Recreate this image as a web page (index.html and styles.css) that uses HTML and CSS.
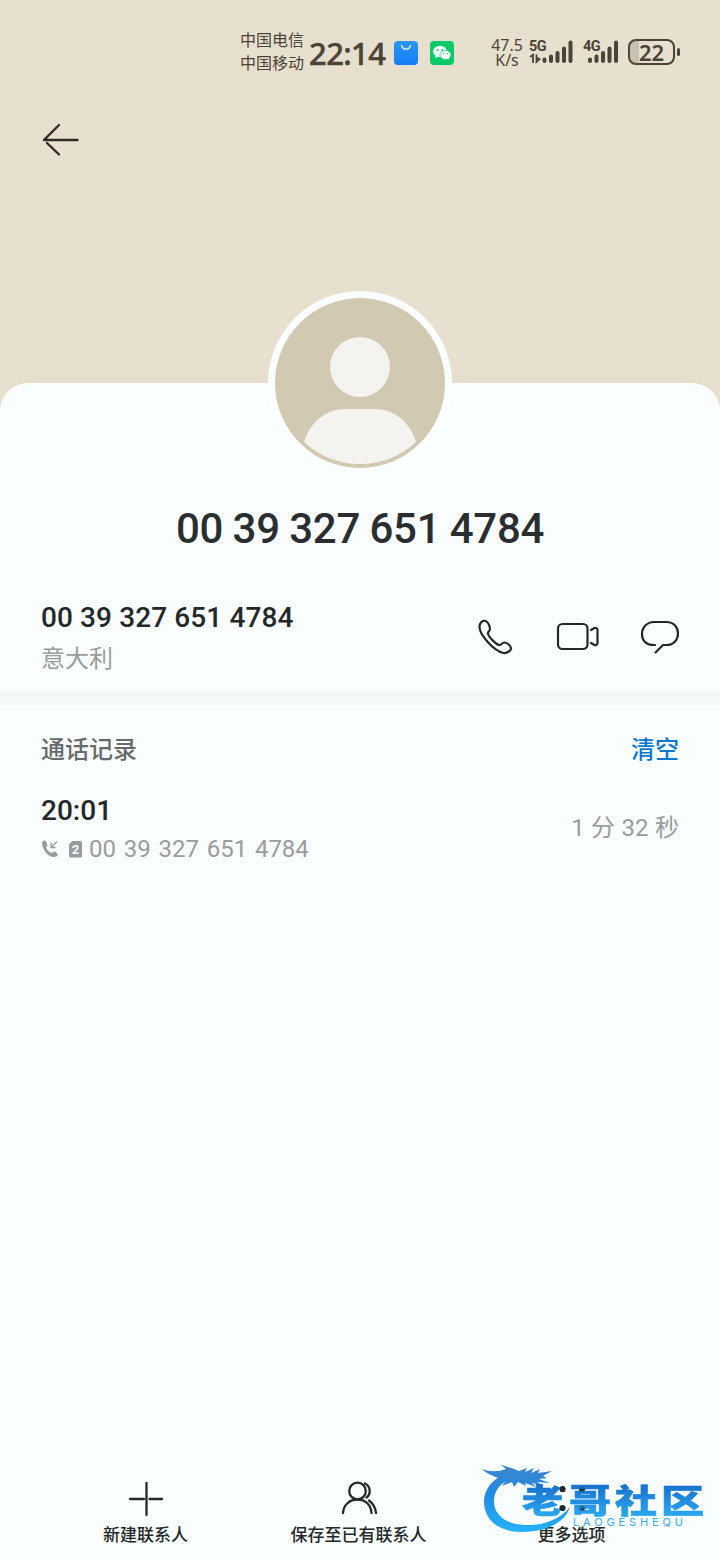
FILE: index.html
```html
<!DOCTYPE html>
<html lang="zh-CN">
<head>
<meta charset="utf-8">
<title>联系人</title>
<link rel="stylesheet" href="styles.css">
</head>
<body>
<div class="screen">
  <header class="hero">
    <div class="status">
      <div class="carriers"><span>中国电信</span><span>中国移动</span></div>
      <div class="clock">22:14</div>
      <svg class="app" viewBox="0 0 24 24"><defs><linearGradient id="shop" x2="0" y2="1"><stop stop-color="#2b98f5"/><stop offset="1" stop-color="#147cf8"/></linearGradient></defs><rect width="24" height="24" rx="4" fill="url(#shop)"/><path d="M7.500 4.500a4.600 4.600 0 0 0 9 0" fill="none" stroke="#e6f4ff" stroke-width="1.300" stroke-linecap="round"/></svg>
      <svg class="app wechat" viewBox="0 0 24 24"><rect width="24" height="24" rx="4" fill="#08ca68"/><path d="M10 5C6 5 3.200 7.400 3.200 10.500c0 1.800 1 3.300 2.500 4.300L5.300 17l2.500-1.300 2.200.3c4 0 6.800-2.400 6.800-5.500S14 5 10 5z" fill="#fff"/><path d="M15.500 9.500c-3.200 0-5.600 2-5.600 4.500s2.400 4.500 5.600 4.500l1.800-.3 2 1-.4-1.800c1.300-.8 2.100-2 2.100-3.400 0-2.500-2.300-4.500-5.500-4.500z" fill="#fff" stroke="#08ca68" stroke-width=".7"/><g fill="#08ca68"><circle cx="7.700" cy="9" r=".9"/><circle cx="12.200" cy="9" r=".9"/><circle cx="13.700" cy="12.700" r=".7"/><circle cx="17.300" cy="12.700" r=".7"/></g></svg>
      <div class="speed"><span>47.5</span><span>K/s</span></div>
      <div class="signal">
        <span class="net">5G</span>
        <svg viewBox="0 0 46 28"><g stroke="#4a4437" stroke-width="4" stroke-linecap="round"><path d="M15.500 20.500v1.500M22 17.500v4.500M28.500 14v8M35 9.500v12.500M41.500 3.500v18.500"/></g><path d="M1 18l3-2.200V24M7.500 15.500V23l3-2.800-2.500-1.300" fill="none" stroke="#4a4437" stroke-width="1.800"/></svg>
      </div>
      <div class="signal second">
        <span class="net">4G</span>
        <svg viewBox="0 0 37 28"><g stroke="#4a4437" stroke-width="4" stroke-linecap="round"><path d="M7 20.500v1.500M13.500 17.500v4.500M20 14v8M26.500 9.500v12.500M33 3.500v18.500"/></g></svg>
      </div>
      <div class="battery"><span>22</span></div><i class="battery-tip"></i>
    </div>
    <svg class="back" viewBox="0 0 38 36"><path d="M2 18h33.500M17 3L2 18M5 21l12 11.500" fill="none" stroke="#302b22" stroke-width="2.400" stroke-linecap="round" stroke-linejoin="round"/></svg>
  </header>

  <main class="card">
    <svg class="avatar" viewBox="0 0 184 184"><circle cx="92" cy="92" r="92" fill="#fcffff"/><circle cx="92" cy="92" r="85" fill="#d2c9b2"/><circle cx="92" cy="76" r="30" fill="#f5f3f0"/><path d="M36 151c6-20 22-33 42-33h28c20 0 36 13 42 33-15 14-34 22-56 22s-41-8-56-22z" fill="#f5f3f0"/></svg>
    <h1>00 39 327 651 4784</h1>
    <section class="number">
      <div><div class="phone">00 39 327 651 4784</div><div class="place">意大利</div></div>
      <svg class="actions" viewBox="0 0 206 40"><g fill="none" stroke="#24282a" stroke-width="2.200" stroke-linecap="round" stroke-linejoin="round">
        <path d="M8.500 4C6 3 2.500 5.500 2.500 10c0 7.500 14 24 24 26 3.500.7 8-3 7.500-5-.5-2.500-3.500-5-6.500-5.500-2-.3-3 2.500-5 2.500-3 0-12-9-11.500-12 .3-2 2.500-2.500 2-4.500C12.500 8.500 11 5 8.500 4z"/>
        <rect x="81" y="7" width="29.500" height="25" rx="4.500"/><path d="M114 13l3.500-2c1.500-.7 3 .2 3 2v13c0 1.800-1.500 2.700-3 2l-3.500-2"/>
        <path d="M178 28h-1.500C169 28 165 23.500 165 17S170 5 177 5h12.500C196.500 5 201 10 201 16.500S196.500 28 189.500 28H186l-7.500 7.500"/></g></svg>
    </section>
    <div class="divider"></div>
    <section class="log-head"><span>通话记录</span><span class="clear">清空</span></section>
    <section class="log">
      <div><div class="time">20:01</div>
        <div class="detail">
          <svg class="incoming" viewBox="0 0 18 18"><path d="M3 .5C1.500 1 .8 2.500 1.200 5 2.200 10.500 7 16 12 17c2 .4 4.500-.6 4.800-2.200.2-1.300-2.500-3.100-3.800-3-1.200.1-1.500 1.500-2.500 1.300-2-.6-4.800-3.600-5.200-5.400-.2-.9 1.200-1.300 1.200-2.400C6.500 3.500 4.500 0 3 .5z" fill="#999c9d"/><path d="M16 1.500L10.500 7M10 2.500v5h4.500" fill="none" stroke="#999c9d" stroke-width="1.300"/></svg>
          <span class="sim">2</span>
          <span>00 39 327 651 4784</span>
        </div></div>
      <div class="duration">1 分 32 秒</div>
    </section>
  </main>

  <footer class="bar">
    <div class="tab"><svg viewBox="0 0 40 40"><path d="M20.500 4v32M4 20h14M23.500 20H36" fill="none" stroke="#25292a" stroke-width="2.300" stroke-linecap="round"/></svg><span>新建联系人</span></div>
    <div class="tab"><svg viewBox="0 0 40 40"><g fill="none" stroke="#25292a" stroke-width="2.300" stroke-linecap="round"><circle cx="18.500" cy="12" r="8.300"/><path d="M4 34C4.500 26 10.500 20.500 18.500 20.500S32 26 32.500 34"/><path d="M26 4.500c6 3 6 11 1.500 14M30 21.500c4 3 6.500 7 7 12.500" stroke-width="2.300"/></g></svg><span>保存至已有联系人</span></div>
    <div class="tab"><svg viewBox="0 0 40 40"><g fill="#20282c"><circle cx="10.500" cy="10" r="3"/><circle cx="30" cy="10" r="3"/><circle cx="10.500" cy="29" r="3"/><circle cx="30" cy="29" r="3"/></g></svg><span>更多选项</span></div>
  </footer>

  <svg class="watermark" viewBox="0 0 250 100">
    <defs><linearGradient id="blue" gradientUnits="userSpaceOnUse" x1="0" y1="12" x2="0" y2="78"><stop stop-color="#3d86cd"/><stop offset=".4" stop-color="#2289e2"/><stop offset="1" stop-color="#25b4f9"/></linearGradient>
    <linearGradient id="word" gradientUnits="userSpaceOnUse" x1="0" y1="31" x2="0" y2="62"><stop stop-color="#1972cf"/><stop offset="1" stop-color="#2ca9f2"/></linearGradient></defs>
    <g class="dragon" fill="url(#blue)">
      <path d="M34 20C22 24 14 35 14 47c0 18 15 30 38 30 24 0 43-9 48-25-10 12-25 18-42 18-21 0-34-9-34-24 0-10 6-18 17-22z"/>
      <path d="M12 14c8 3 16 3 24 0l-5-4c8 2 13 4 18 6l8-3-2 4 9-4-3 5 9-4-2 4 14-2-9 5 4 2-8 1 11 4-13-1 7 4-12-3 4 4-11-4 1 3-8-4-4 5-2-5-10 4 4-5-9 2 4-4C22 21 16 18 12 14z"/>
    </g>
    <g fill="url(#word)" stroke="url(#word)" class="brand"><text x="52" y="58" textLength="41" lengthAdjust="spacingAndGlyphs">老</text><text x="99" y="58" textLength="42" lengthAdjust="spacingAndGlyphs">哥</text><text x="145" y="58" textLength="42" lengthAdjust="spacingAndGlyphs">社</text><text x="191" y="58" textLength="43" lengthAdjust="spacingAndGlyphs">区</text></g>
    <text class="latin" x="103" y="71" textLength="110">LAOGESHEQU</text>
    <g fill="#20282c"><circle cx="92.500" cy="34.500" r="2.800"/><circle cx="92.500" cy="53.300" r="2.800"/><g opacity=".4"><circle cx="112" cy="34.500" r="2.800"/><circle cx="112" cy="53.300" r="2.800"/></g></g>
  </svg>
</div>
</body>
</html>
```
FILE: styles.css
```css
* { box-sizing: border-box; }
body { margin: 0; font-family: Roboto, "Noto Sans CJK SC", sans-serif; color: #25282a; }
.screen { position: relative; width: 720px; height: 1560px; display: flex; flex-direction: column; background: #e8e0cf; overflow: hidden; }
.hero { height: 383px; flex: none; padding-top: 29px; }
.status { display: flex; align-items: flex-start; height: 46px; padding-left: 240px; color: #4a4437; }
.carriers { display: flex; flex-direction: column; width: 69px; margin-top: -1px; font: 16px/23px "Noto Sans CJK SC", sans-serif; }
.clock { width: 85px; font: 500 31px/49px "Noto Sans", Roboto, sans-serif; letter-spacing: -.6px; -webkit-text-stroke: .5px #4a4437; }
.app { width: 24px; height: 24px; margin: 12px 12px 0 0; flex: none; }
.wechat { margin-right: 37px; }
.speed { display: flex; flex-direction: column; align-items: center; width: 32px; margin-top: 9px; font: 16px/15px "Noto Sans", Roboto, sans-serif; }
.signal { position: relative; width: 46px; height: 28px; margin: 10px 0 0 6px; flex: none; }
.signal svg { display: block; width: 100%; height: 100%; }
.second { width: 37px; margin-left: 8px; }
.net { position: absolute; left: 0; top: -1px; font: 700 14.500px/17px Roboto, sans-serif; letter-spacing: -.6px; }
.battery { width: 47px; height: 26px; margin: 10px 0 0 8px; border: 2px solid #4a4437; border-radius: 8px; background: linear-gradient(90deg, #c9c0b2 22%, transparent 22%); font: 600 22px/23px "Noto Sans", Roboto, sans-serif; text-align: center; flex: none; }
.battery-tip { width: 3px; height: 8px; margin: 19px 0 0 2px; border-radius: 2px; background: #4a4437; }
.back { display: block; width: 38px; height: 36px; margin: 47px 0 0 42px; }
.card { flex: 1; background: #fafeff; border-radius: 28px 28px 0 0; }
.avatar { display: block; width: 184px; height: 184px; margin: -92px auto 0; }
h1 { margin: 26px 0 0; font: 500 42px/56px Roboto, sans-serif; letter-spacing: -.3px; word-spacing: -.6px; text-align: center; white-space: nowrap; color: #2b2e30; }
.number { display: flex; justify-content: space-between; height: 134px; padding: 41px 37px 0 41px; }
.phone { font-size: 28px; font-weight: 500; line-height: 40px; letter-spacing: .1px; }
.place { font-size: 24px; line-height: 42px; color: #999c9d; }
.actions { width: 206px; height: 40px; margin-top: 19px; }
.divider { height: 14px; background: #f5f8f8; }
.log-head { display: flex; justify-content: space-between; padding: 27px 41px 0; font-size: 24px; font-weight: 500; line-height: 36px; color: #666a6b; }
.clear { color: #0878ce; }
.log { display: flex; justify-content: space-between; padding: 24px 41px 0; }
.time { font-size: 28px; font-weight: 500; line-height: 38px; }
.detail { display: flex; align-items: center; height: 38px; font-size: 24px; color: #999c9d; word-spacing: 1.800px; }
.incoming { width: 18px; height: 18px; margin-right: 10px; }
.sim { width: 13px; height: 17px; margin-right: 7px; border-radius: 2px; background: #999c9d; color: #fff; font-size: 13px; font-weight: 700; line-height: 17px; text-align: center; clip-path: polygon(30% 0, 100% 0, 100% 100%, 0 100%, 0 22%); }
.duration { font-size: 24px; line-height: 36px; margin-top: 18px; color: #999c9d; word-spacing: .5px; }
.bar { display: grid; grid-template-columns: repeat(3, 213px); height: 81px; padding-left: 39px; flex: none; background: #fafeff; }
.tab { display: flex; flex-direction: column; align-items: center; font: 500 17px/24px "Noto Sans CJK SC", sans-serif; }
.tab svg { width: 40px; height: 40px; margin-bottom: 3px; }
.watermark { position: absolute; left: 470px; top: 1455px; width: 250px; height: 100px; }
.dragon { filter: blur(.6px); }
.brand { font: 900 33px "Noto Sans CJK SC", sans-serif; stroke-width: .6; filter: blur(.4px); }
.latin { font: 11px Inter, sans-serif; fill: #42a9e8; }
```
